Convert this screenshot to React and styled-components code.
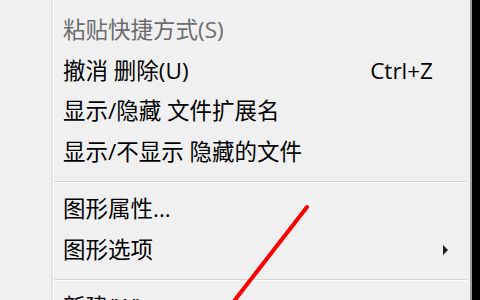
import styled, { createGlobalStyle } from "styled-components";

const GlobalStyle = createGlobalStyle`
  html, body {
    margin: 0;
    padding: 0;
    background: #000;
  }
  #root {
    width: 480px;
    height: 300px;
    overflow: hidden;
  }
`;

const Menu = styled.div`
  position: relative;
  display: flex;
  width: 470px;
  height: 300px;
  overflow: hidden;
  background: #f0f0f0;
  border-right: 2px solid #9c9c9c;
  font-family: "Open Sans", "Noto Sans CJK SC", sans-serif;
  font-size: 22.5px;
`;

const Gutter = styled.div`
  width: 51px;
  flex-shrink: 0;
  background: #f0f0f0;
  border-right: 2px solid #e2e2e2;
  box-shadow: 1px 0 0 #ffffff;
`;

const List = styled.div`
  flex: 1;
  padding-top: 10px;
  margin-left: 1px;
`;

const Item = styled.div`
  display: grid;
  grid-template-columns: 1fr auto 15px;
  align-items: center;
  height: 40.5px;
  padding: 0 22px 0 9px;
  color: ${(p) => (p.$disabled ? "#6d6d6d" : "#000")};
  white-space: nowrap;
`;

const Label = styled.span`
  line-height: 1;
`;

const Shortcut = styled.span`
  line-height: 1;
`;

const ArrowCell = styled.span`
  display: flex;
  justify-content: flex-end;
`;

const Arrow = styled.span`
  width: 0;
  height: 0;
  border-left: 5px solid #1e1e1e;
  border-top: 5px solid transparent;
  border-bottom: 5px solid transparent;
`;

const Separator = styled.div`
  height: 17px;
  padding-top: 9px;
  padding-right: 3px;
  box-sizing: border-box;

  &::after {
    content: "";
    display: block;
    border-top: 1px solid #d5d5d5;
    border-bottom: 1px solid #ffffff;
  }
`;

const Overlay = styled.svg`
  position: absolute;
  left: 0;
  top: 0;
  pointer-events: none;
`;

const items = [
  { label: "粘贴快捷方式(S)", disabled: true },
  { label: "撤消 删除(U)", shortcut: "Ctrl+Z" },
  { label: "显示/隐藏 文件扩展名" },
  { label: "显示/不显示 隐藏的文件" },
  { sep: true },
  { label: "图形属性..." },
  { label: "图形选项", sub: true },
  { sep: true },
  { label: "新建(W)", sub: true },
];

export default function App() {
  return (
    <>
      <GlobalStyle />
      <Menu>
        <Gutter />
        <List>
          {items.map((it, i) =>
            it.sep ? (
              <Separator key={i} />
            ) : (
              <Item key={i} $disabled={it.disabled}>
                <Label>{it.label}</Label>
                <Shortcut>{it.shortcut || ""}</Shortcut>
                <ArrowCell>{it.sub && <Arrow />}</ArrowCell>
              </Item>
            )
          )}
        </List>
        <Overlay width="480" height="300" viewBox="0 0 480 300">
          <line
            x1="307"
            y1="207"
            x2="231"
            y2="305"
            stroke="#ff0000"
            strokeWidth="4"
            strokeLinecap="round"
          />
        </Overlay>
      </Menu>
    </>
  );
}
